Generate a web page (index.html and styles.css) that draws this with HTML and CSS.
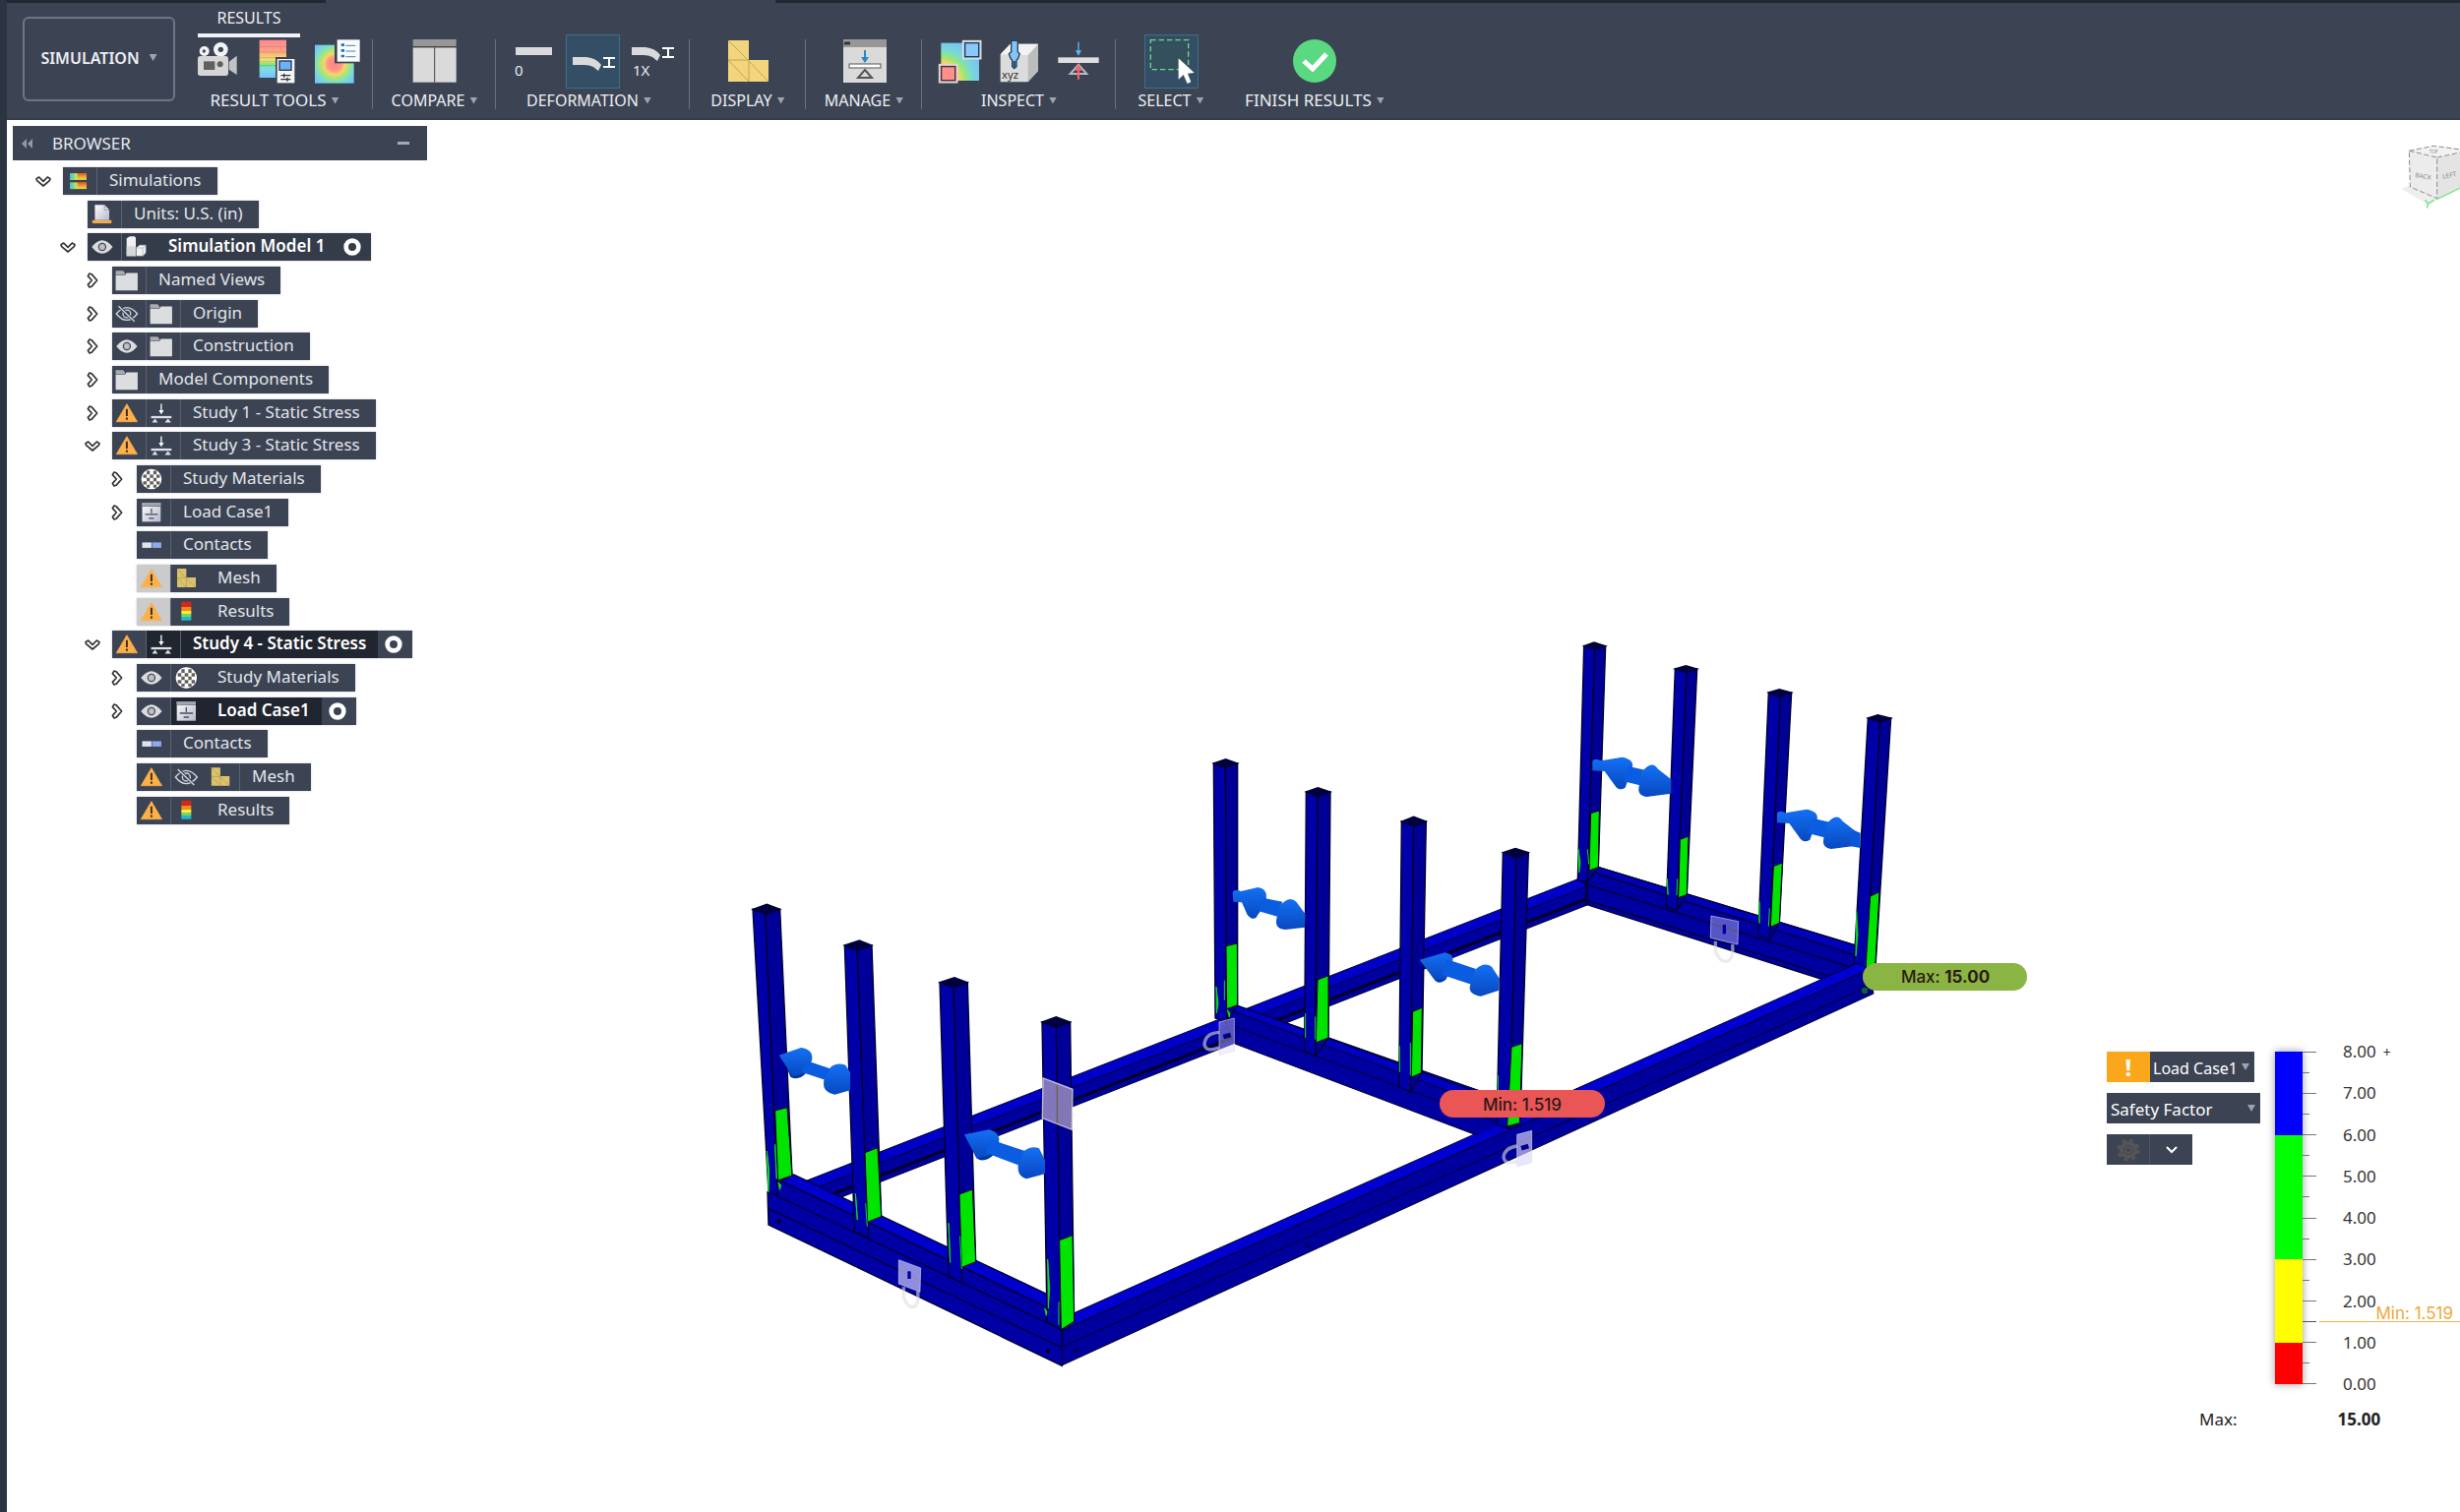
FILE: index.html
```html
<!DOCTYPE html>
<html lang="en">
<head>
<meta charset="utf-8">
<title>Simulation results</title>
<link rel="stylesheet" href="styles.css">
</head>
<body>
<svg class="sprite" aria-hidden="true">
  <defs>
    <linearGradient id="heat" x1="0" x2="0" y1="1" y2="0"><stop offset="0" stop-color="#e8e04a"/><stop offset=".5" stop-color="#f0a030"/><stop offset="1" stop-color="#e8501e"/></linearGradient>
    <linearGradient id="heatside" x1="0" x2="1"><stop offset="0" stop-color="#2cc6e8"/><stop offset=".4" stop-color="#c8e84a"/><stop offset=".5" stop-color="#c8e84a" stop-opacity="0"/></linearGradient>
    <linearGradient id="arrow" x1="0" x2="0" y1="0" y2="1"><stop offset="0" stop-color="#1470f4"/><stop offset="1" stop-color="#0848c0"/></linearGradient>
    <linearGradient id="rain" x1="0" x2="0" y1="0" y2="1"><stop offset="0" stop-color="#ff8a90"/><stop offset=".28" stop-color="#ff9f87"/><stop offset=".45" stop-color="#f6d070"/><stop offset=".58" stop-color="#e9e372"/><stop offset=".63" stop-color="#70ec84"/><stop offset=".78" stop-color="#82d8e8"/><stop offset="1" stop-color="#74c4ff"/></linearGradient>
    <radialGradient id="spot" cx=".5" cy=".5" r=".68"><stop offset="0" stop-color="#ff8288"/><stop offset=".27" stop-color="#ff9a84"/><stop offset=".4" stop-color="#f6d46c"/><stop offset=".55" stop-color="#a5e872"/><stop offset=".72" stop-color="#7cdcd0"/><stop offset="1" stop-color="#74c0ff"/></radialGradient>
    <radialGradient id="corner" cx="0" cy="1" r="1.15"><stop offset=".2" stop-color="#ff8a84"/><stop offset=".42" stop-color="#f4d468"/><stop offset=".55" stop-color="#9be870"/><stop offset=".7" stop-color="#78dcd0"/><stop offset="1" stop-color="#78bcff"/></radialGradient>
    <linearGradient id="page" x1="0" x2="1" y1="0" y2="1"><stop offset="0" stop-color="#fff"/><stop offset="1" stop-color="#b4b8cc"/></linearGradient>
  </defs>
  <symbol id="down" viewBox="0 0 48 48"><path d="M3 17 L11 12 L24 25 L37 12 L45 17 L43 23 L24 39 L5 23 Z" fill="#fff" stroke="#333" stroke-width="5" stroke-linejoin="round"/></symbol>
  <symbol id="right" viewBox="0 0 48 48"><path d="M15 3 L10 11 L22 24 L10 37 L15 45 L21 43 L38 24 L21 5 Z" fill="#fff" stroke="#333" stroke-width="5" stroke-linejoin="round"/></symbol>
  <symbol id="sims" viewBox="0 0 105 84"><path d="M22 18H74V38H22ZM22 47H74V67H22Z" fill="#f0a030"/><rect x="22" y="18" width="52" height="20" fill="url(#heat)"/><rect x="22" y="47" width="52" height="20" fill="url(#heat)"/><rect x="22" y="18" width="52" height="20" fill="url(#heatside)"/><rect x="22" y="47" width="52" height="20" fill="url(#heatside)"/></symbol>
  <symbol id="units" viewBox="0 0 105 84"><path d="M23 12H53L68 28V60H23Z" fill="url(#page)"/><path d="M53 12V28H68" fill="#d8dae4" stroke="#80869a" stroke-width="2"/><rect x="15" y="60" width="60" height="10" fill="#f2ad48"/></symbol>
  <symbol id="eye" viewBox="0 0 105 84"><path d="M13 42Q46 0 79 42Q46 84 13 42Z" fill="#d9dbdd"/><circle cx="46" cy="42" r="11" fill="#bfc0c3" stroke="#444b58" stroke-width="4"/></symbol>
  <symbol id="eyeoff" viewBox="0 0 105 84"><path d="M13 42Q46 2 79 42Q46 82 13 42Z" fill="none" stroke="#d4d7dd" stroke-width="4"/><circle cx="46" cy="42" r="12" fill="none" stroke="#d4d7dd" stroke-width="4"/><path d="M23 20L70 66" stroke="#3d4555" stroke-width="9"/><path d="M20 18L70 66" stroke="#d4d7dd" stroke-width="4"/></symbol>
  <symbol id="model" viewBox="0 0 105 84"><path d="M14 16L24 10H38L42 14V70H14Z" fill="#f1f1f3"/><path d="M14 40H42V70H14Z" fill="#d6d7da"/><path d="M43 44L54 36H73V60L64 70H43Z" fill="#f4f4f5" stroke="#6e7480" stroke-width="2"/><path d="M43 45H63V70M63 45L73 37" fill="none" stroke="#a4a8b0" stroke-width="2"/></symbol>
  <symbol id="folder" viewBox="0 0 105 84"><path d="M11 12H34L40 18V24H11Z" fill="#a9abb0"/><path d="M11 26H40L45 19H80V74H11Z" fill="#dcdddf"/></symbol>
  <symbol id="warn" viewBox="0 0 105 84"><path d="M46 13L79 69H13Z" fill="#fcb04a" stroke="#fcb04a" stroke-width="2"/><path d="M46 29V51M46 56V63" stroke="#3b2d18" stroke-width="6"/></symbol>
  <symbol id="stress" viewBox="0 0 105 84"><path d="M46 13V36" stroke="#fff" stroke-width="4"/><path d="M38 33H54L46 46Z" fill="#fff"/><rect x="14" y="51" width="64" height="7" fill="#dfe1e6"/><path d="M17 71L26 59L35 71ZM57 71L67 59L77 71Z" fill="#dfe1e6"/></symbol>
  <symbol id="mat" viewBox="0 0 105 84"><circle cx="46" cy="42" r="32" fill="#fff"/><path d="M31 16h10v11h-10zM52 16h10v11h-10zM20 28h11v10h-11zM41 28h11v10h-11zM62 28h10v10h-10zM31 38h10v11h-10zM52 38h10v11h-10zM20 49h11v10h-11zM41 49h11v10h-11zM62 49h10v10h-10zM31 60h10v9h-10zM52 60h10v9h-10z" fill="#60605c"/></symbol>
  <symbol id="load" viewBox="0 0 105 84"><rect x="17" y="12" width="58" height="59" fill="url(#page)"/><rect x="17" y="12" width="58" height="8" fill="#9da1a9"/><path d="M17 22H75" stroke="#3a4050" stroke-width="2"/><path d="M46 30V44M26 48H66M38 60H54" stroke="#4a4e58" stroke-width="4"/></symbol>
  <symbol id="contact" viewBox="0 0 105 84"><rect x="17" y="34" width="29" height="17" fill="#dde5ee"/><rect x="48" y="34" width="29" height="17" fill="#8ea9ea"/></symbol>
  <symbol id="mesh" viewBox="0 0 105 84"><path d="M18 12H46V39H75V69H18Z" fill="#dcc26c"/><path d="M18 12L46 42L75 69M18 40H46V69M18 40L46 69" fill="none" stroke="#b0984c" stroke-width="2"/></symbol>
  <symbol id="result" viewBox="0 0 105 84"><rect x="31" y="11" width="30" height="16" fill="#d02a1c"/><rect x="31" y="27" width="30" height="12" fill="#f48a1c"/><rect x="31" y="39" width="30" height="11" fill="#f8ee3c"/><rect x="31" y="50" width="30" height="9" fill="#5ce07c"/><rect x="31" y="59" width="30" height="9" fill="#22b8dc"/></symbol>
  <symbol id="ring" viewBox="0 0 105 84"><circle cx="48" cy="42" r="19" fill="none" stroke="#fff" stroke-width="14"/></symbol>
</svg>

<div class="app">
  <div class="topstrip"></div>
  <header class="toolbar">
    <button class="workspace">SIMULATION<i class="caret"></i></button>
    <div class="ribbon">
      <nav class="tabs"><a class="tab" href="#results">RESULTS</a></nav>
      <div class="groups">
        <section class="group g-tools">
          <div class="icons">
            <button class="tool" aria-label="Animate"><svg viewBox="18 15 165 165"><circle cx="53" cy="66" r="15" fill="#f2f3f5"/><circle cx="52" cy="66" r="5" fill="#3c4454"/><circle cx="103" cy="61" r="22" fill="#f2f3f5"/><circle cx="103" cy="61" r="8" fill="#3c4454"/><rect x="33" y="81" width="93" height="60" rx="8" fill="#d6d6d6"/><rect x="51" y="97" width="34" height="26" fill="#60605e"/><circle cx="101" cy="106" r="9" fill="#60605e"/><path d="M128 98L152 80V138L128 122Z" fill="#c0c2c6"/></svg></button>
            <button class="tool" aria-label="Legend options"><svg viewBox="198 15 165 165"><rect x="221" y="32" width="82" height="115" fill="url(#rain)"/><path d="M221 52H303M221 69H303M221 86H303M221 98H303M221 110H303" stroke="#555" stroke-opacity=".35" stroke-width="2"/><rect x="270" y="84" width="60" height="80" fill="#3c4454"/><rect x="275" y="90" width="53" height="73" fill="#f5f5f5"/><rect x="282" y="96" width="36" height="28" fill="#6cb2f8" stroke="#2b3a4e" stroke-width="4"/><path d="M286 140H316M286 152H316M296 134V146M306 146V158" stroke="#333" stroke-width="4"/></svg></button>
            <button class="tool" aria-label="Result details"><svg viewBox="378 15 165 165"><rect x="390" y="47" width="119" height="117" fill="url(#spot)"/><rect x="450" y="26" width="78" height="77" fill="#3c4454"/><rect x="458" y="31" width="69" height="67" fill="#fafafa"/><path d="M470 47H480M470 64H480M470 81H480" stroke="#1e78b4" stroke-width="8"/><path d="M484 49H514M484 66H514M484 83H514" stroke="#3a87ba" stroke-width="3"/></svg></button>
          </div>
          <button class="glabel">RESULT TOOLS<i class="caret"></i></button>
        </section>
        <section class="group g-compare">
          <div class="icons"><button class="tool" aria-label="Compare"><svg viewBox="673 15 165 165"><rect x="690" y="30" width="132" height="21" fill="#979797"/><rect x="690" y="55" width="132" height="106" fill="#dadada"/><path d="M690 53H822M756 55V161" stroke="#444" stroke-width="3"/></svg></button></div>
          <button class="glabel">COMPARE<i class="caret"></i></button>
        </section>
        <section class="group g-deform">
          <div class="icons">
            <button class="tool" aria-label="Undeformed"><svg viewBox="516 35 55 55"><rect x="525" y="48" width="37" height="8" fill="#dadada"/><text x="524" y="77" class="tiny">0</text></svg></button>
            <button class="tool on" aria-label="Adjusted deformation"><svg viewBox="576 35 55 55"><path d="M583 58H597Q607 59 612 66L609 72L604 68Q600 66 595 66H583Z" fill="#dadada"/><path d="M614 59H626M614 68H626M620 59V68" stroke="#fff" stroke-width="2" fill="none"/></svg></button>
            <button class="tool" aria-label="Actual deformation"><svg viewBox="636 35 55 55"><path d="M643 48H657Q667 49 672 56L669 62L664 58Q660 56 655 56H643Z" fill="#dadada"/><path d="M674 49H686M674 58H686M680 49V58" stroke="#fff" stroke-width="2" fill="none"/><text x="644" y="77" class="tiny">1X</text></svg></button>
          </div>
          <button class="glabel">DEFORMATION<i class="caret"></i></button>
        </section>
        <section class="group g-display">
          <div class="icons"><button class="tool" aria-label="Display"><svg viewBox="733 35 55 55"><path d="M740 41H761V61H781V83H740Z" fill="#f2d57c"/><path d="M740 41L761 62L781 83M740 61H761V83M740 61L761 83" fill="none" stroke="#c4a555"/></svg></button></div>
          <button class="glabel">DISPLAY<i class="caret"></i></button>
        </section>
        <section class="group g-manage">
          <div class="icons"><button class="tool" aria-label="Manage"><svg viewBox="851 35 55 55"><rect x="857" y="40" width="44" height="44" fill="#dadada"/><rect x="857" y="40" width="44" height="8" fill="#979797"/><path d="M858 44H864" stroke="#333" stroke-width="3"/><path d="M879 51V60" stroke="#2b86c8" stroke-width="2"/><path d="M875 58H883L879 64Z" fill="#2b86c8"/><rect x="863" y="65" width="32" height="4" fill="#fff" stroke="#555"/><path d="M879 71L886 79H872Z" fill="none" stroke="#555" stroke-width="2"/></svg></button></div>
          <button class="glabel">MANAGE<i class="caret"></i></button>
        </section>
        <section class="group g-inspect">
          <div class="icons">
            <button class="tool" aria-label="Min and max"><svg viewBox="24 15 165 165"><rect x="49" y="41" width="116" height="115" fill="url(#corner)"/><rect x="116" y="35" width="54" height="54" fill="#88c8fa" stroke="#d9dbde" stroke-width="5"/><rect x="122" y="41" width="42" height="42" fill="none" stroke="#2b3a4e" stroke-width="4"/><rect x="44" y="107" width="54" height="54" fill="#ff8f88" stroke="#d9dbde" stroke-width="5"/><rect x="50" y="113" width="42" height="42" fill="none" stroke="#333c4a" stroke-width="4"/></svg></button>
            <button class="tool" aria-label="Point probe"><svg viewBox="204 15 165 165"><path d="M230 76L260 44H345V126L314 160H230Z" fill="#dcdcdc"/><path d="M314 78L345 44V126L314 160Z" fill="#bcbcbc"/><path d="M230 76L260 44H345L314 78Z" fill="#f2f2f2"/><path d="M263 34H283V68L289 74L284 88L279 94V113L272 119L266 113V94L261 88L256 74L263 68Z" fill="#84c4f6" stroke="#25405c" stroke-width="4"/><path d="M268 96H277V116H268Z" fill="#30557a"/><text x="234" y="149" class="xyz">xyz</text></svg></button>
            <button class="tool" aria-label="Reactions"><svg viewBox="384 15 165 165"><rect x="406" y="85" width="124" height="17" fill="#dedede"/><path d="M468 38V68" stroke="#5cb8f0" stroke-width="4"/><path d="M459 64H477L468 80Z" fill="#5cb8f0"/><path d="M468 107L493 135H443Z" fill="none" stroke="#b8babf" stroke-width="6"/><path d="M468 120V152" stroke="#f0686a" stroke-width="6"/><path d="M455 125L468 106L481 125Z" fill="#f0686a"/></svg></button>
          </div>
          <button class="glabel">INSPECT<i class="caret"></i></button>
        </section>
        <section class="group g-select">
          <div class="icons"><button class="tool on" aria-label="Select"><svg viewBox="665 15 165 165"><rect x="684" y="32" width="115" height="90" fill="#33505c" stroke="#74d690" stroke-width="4" stroke-dasharray="16 9"/><path d="M769 88V152L784 138L796 165L807 160L797 134L817 132Z" fill="#fff"/></svg></button></div>
          <button class="glabel">SELECT<i class="caret"></i></button>
        </section>
        <section class="group g-finish">
          <div class="icons"><button class="tool" aria-label="Finish results"><svg viewBox="0 0 55 55"><circle cx="27" cy="27" r="22" fill="#5bd882"/><path d="M16 27L25 35L39 20" fill="none" stroke="#fff" stroke-width="5"/></svg></button></div>
          <button class="glabel">FINISH RESULTS<i class="caret"></i></button>
        </section>
      </div>
    </div>
  </header>

  <main class="viewport">
    <svg class="scene" viewBox="7 122 2493 1415" preserveAspectRatio="xMinYMin meet" role="img" aria-label="Safety factor plot of the frame">
      <!-- far long beam -->
      <g stroke="#000028" stroke-width="1">
        <path d="M810 1205L1605 895L1613 898V920L855 1217L830 1222Z" fill="#0000a0"/>
        <path d="M815 1202L1605 893L1613 901L828 1208Z" fill="#0000c8"/>
        <path d="M846 1214L1612 914" fill="none" stroke-width="3"/>
      </g>
      <!-- right bay -->
      <g transform="translate(1560 630) scale(.33333)" stroke="#000030" stroke-width="4">
        <path d="M155 800L195 755L990 997L1020 1055L880 1098L155 868Z" fill="#0000a0"/>
        <path d="M170 768L195 755L985 995L975 1022Z" fill="#0000b8"/>
        <path d="M160 808L965 1060M165 858L900 1088M160 795V868" fill="none"/>
        <path d="M149 80L182 90L160 800L130 795ZM427 150L462 160L433 885L400 875ZM712 222L748 235L715 975L680 960ZM1015 300L1052 312L1010 1068L972 1055Z" fill="#0000a8"/>
        <path d="M182 90L215 80L193 755L160 800ZM462 160L494 150L463 838L433 885ZM748 235L782 222L745 925L715 975ZM1052 312L1085 300L1038 1060L1010 1068Z" fill="#000094"/>
        <path d="M149 80L180 69L215 80L182 90ZM427 150L460 140L494 150L462 160ZM712 222L745 212L782 222L748 235ZM1015 300L1045 290L1085 300L1052 312Z" fill="#000040"/>
        <path d="M170 590L196 582L193 755L165 765ZM442 670L468 660L463 838L437 848ZM727 752L754 741L745 925L718 937ZM1022 843L1050 830L1037 1060L1008 1060Z" fill="#00e400" stroke-width="3"/>
        <path d="M132 700L138 740L134 770ZM403 790L405 838ZM684 860V925ZM980 890L984 960L978 1025ZM160 700L164 745M434 790L432 840M715 880L712 935" stroke="#10d820" stroke-width="3" fill="#10d820"/>
      </g>
      <!-- near long beam -->
      <g stroke="#000028" stroke-width="1">
        <path d="M1080 1352L1900 985L1904 1010L1079 1388Z" fill="#00009c"/>
        <path d="M1093 1334L1888 979L1900 985L1080 1352Z" fill="#0000d0"/>
        <path d="M1080 1369L1903 1001" fill="none"/>
        <circle cx="1329" cy="1266" r="2" fill="none"/><circle cx="1093" cy="1373" r="2" fill="none"/>
        <circle cx="1895" cy="1007" r="4" fill="#0c5a58"/>
      </g>
      <!-- middle bay -->
      <g stroke="#000028" stroke-width="1">
        <path d="M1241 1030L1257 1022L1530 1118L1536 1146L1498 1153L1255 1061Z" fill="#0000a0"/>
        <path d="M1251 1027L1257 1022L1520 1117L1515 1125Z" fill="#0000c0"/>
        <path d="M1253 1043L1533 1145" fill="none"/>
      </g>
      <g transform="translate(1140 740) scale(.33333)" stroke="#000030" stroke-width="4">
        <path d="M1085 1238L1180 1195L1222 1200L1190 1225Z" fill="#0000c8" stroke="none"/>
        <path d="M280 108L316 121L320 895L285 885ZM562 195L597 210L590 1000L557 985ZM853 285L890 300L880 1110L845 1095ZM1162 380L1203 396L1182 1222L1143 1210Z" fill="#0000a8"/>
        <path d="M316 121L353 108V845L320 895ZM597 210L636 195L630 945L590 1000ZM890 300L928 285L915 1052L880 1110ZM1203 396L1240 380L1215 1205L1182 1222Z" fill="#000094"/>
        <path d="M280 108L317 95L353 108L316 121ZM562 195L598 182L636 195L597 210ZM853 285L890 271L928 285L890 300ZM1162 380L1200 367L1240 380L1203 396Z" fill="#000040"/>
        <path d="M318 665L352 657L353 845L320 857ZM597 768L630 755V945L592 960ZM887 865L916 853L913 1052L883 1065ZM1188 973L1221 962L1213 1205L1175 1215Z" fill="#00e400" stroke-width="3"/>
        <path d="M288 790L294 840L289 870ZM560 870V945M847 970V1050M1147 1060V1110M313 770V830M590 880V950M880 960V1060M322 860L330 870L328 882Z" stroke="#10d820" stroke-width="3" fill="#10d820"/>
      </g>
      <!-- left bay -->
      <g transform="translate(740 890) scale(.33333)" stroke="#000030" stroke-width="4">
        <path d="M120 965L160 930L975 1318L1018 1385V1495L123 1065Z" fill="#0000a4"/>
        <path d="M160 930L200 912L975 1278V1318Z" fill="#0000cc"/>
        <path d="M150 978L1018 1385M123 1015L1018 1440" fill="none"/>
        <circle cx="155" cy="1055" r="5"/><circle cx="975" cy="1450" r="5"/>
        <path d="M75 103L113 118L150 975L123 965ZM355 213L393 228L428 1105L385 1085ZM645 326L687 342L713 1243L672 1220ZM957 447L1000 462L1015 1385L972 1360Z" fill="#0000a8"/>
        <path d="M113 118L158 103L195 915L150 935ZM393 228L438 213L467 1040L425 1057ZM687 342L730 326L755 1178L712 1195ZM1000 462L1043 447L1055 1360L1015 1385Z" fill="#000098"/>
        <path d="M75 103L118 88L158 103L113 118ZM355 213L400 198L438 213L393 228ZM645 326L690 311L730 326L687 342ZM957 447L1000 431L1043 447L1000 462Z" fill="#000040"/>
        <path d="M143 717L180 707L195 915L152 930ZM417 845L456 830L467 1040L425 1057ZM705 972L745 957L755 1178L712 1195ZM1010 1112L1050 1097L1055 1360L1015 1385Z" fill="#00e400" stroke-width="3"/>
        <path d="M118 840L125 900L123 965ZM388 970L394 1050ZM672 1060L677 1180ZM974 1170L980 1260L976 1320ZM143 820L148 925ZM153 935L161 945L157 958ZM965 1320L972 1330L970 1342ZM419 1000L424 1070M707 1100L712 1200M1008 1300V1370" stroke="#10d820" stroke-width="3" fill="#10d820"/>
        <path d="M960 618L1050 652L1048 775L958 740Z" fill="#b4a4c4" fill-opacity=".72" stroke="#ddd" stroke-opacity=".8"/><path d="M1003 640V755" stroke="#665" fill="none"/>
      </g>
      <!-- load arrows -->
      <g transform="translate(740 890) scale(.33333)">
        <path d="M200 560L240 600Q215 628 190 614L176 580ZM790 805L812 850Q780 880 757 862L742 828Z" fill="#0038a0"/>
        <path d="M155 548L222 525Q262 530 255 565L228 605L197 612Z" fill="url(#arrow)"/><path d="M240 565L315 590L300 625L225 600Z" fill="#0a5ce0"/><path d="M312 585Q330 568 358 578L372 600V655L325 668Q285 660 292 625Z" fill="url(#arrow)"/>
        <path d="M720 790L795 775Q832 785 825 815L795 855L757 862Z" fill="url(#arrow)"/><path d="M800 805L905 840L890 885L785 845Z" fill="#0a5ce0"/><path d="M902 840Q925 822 948 832L966 868V910L910 925Q878 915 885 878Z" fill="url(#arrow)"/>
      </g>
      <g transform="translate(1140 740) scale(.33333)">
        <path d="M960 730L990 765Q970 785 955 770ZM400 545L422 560Q400 590 382 568Z" fill="#0038a0"/>
        <path d="M908 707L985 685Q1015 690 1008 715L990 765L955 770Z" fill="url(#arrow)"/><path d="M990 705L1080 735L1068 783L975 752Z" fill="#0a5ce0"/><path d="M1080 735Q1105 712 1128 728L1152 765L1150 800L1095 818Q1055 812 1062 785Z" fill="url(#arrow)"/>
        <path d="M338 500Q345 490 363 498L415 486Q445 490 440 522L410 578Q395 588 382 568L366 532L340 530Z" fill="url(#arrow)"/><path d="M430 518L490 530L475 575L415 558Z" fill="#0a5ce0"/><path d="M480 545Q510 508 532 530L560 568L558 608L498 615Q465 612 472 582Z" fill="url(#arrow)"/>
      </g>
      <g transform="translate(1560 630) scale(.33333)">
        <g id="load-arrow"><path d="M175 432Q180 420 202 430L265 419Q302 425 297 450L275 512Q255 525 243 505L212 462L175 460Z" fill="url(#arrow)"/><path d="M285 447L335 458L325 506L268 492Z" fill="#0a5ce0"/><path d="M325 465Q355 425 375 455L415 487V530L340 540Q310 535 317 508Z" fill="url(#arrow)"/></g>
        <use href="#load-arrow" x="563" y="159"/>
        <path d="M970 641L992 650V696L960 690Z" fill="#0a58d8"/>
      </g>
      <!-- fixed constraints -->
      <g fill="#dcd8ff" fill-opacity=".65" stroke="#ddd" stroke-opacity=".6" stroke-width="3">
        <g transform="translate(740 890) scale(.33333)"><path d="M520 1172L587 1197L585 1270L520 1245Z"/><path d="M535 1255V1285Q545 1318 565 1316Q582 1310 578 1268" fill="none" stroke-width="10"/><path d="M552 1207V1230" stroke="#0000a0" stroke-opacity="1" stroke-width="10"/></g>
        <g transform="translate(1560 630) scale(.33333)"><path d="M537 903L620 920L618 990L535 970Z" fill-opacity=".4"/><path d="M550 980V1010Q562 1045 585 1042Q606 1035 602 990" fill="none" stroke-width="10"/><path d="M577 930V958" stroke="#0000a0" stroke-opacity="1" stroke-width="10"/></g>
        <g transform="translate(1140 740) scale(.33333)"><path d="M297 897L343 885V985L297 998Z" fill-opacity=".4"/><path d="M297 928Q255 930 252 965Q255 990 297 975" fill="none" stroke-width="10"/><path d="M310 942L332 936" stroke="#000080" stroke-opacity="1" stroke-width="14"/>
        <path d="M1205 1240L1250 1228V1325L1205 1338Z"/><path d="M1205 1275Q1168 1280 1164 1308Q1168 1335 1205 1322" fill="none" stroke-width="10"/><path d="M1218 1282L1240 1275" stroke="#000080" stroke-opacity="1" stroke-width="14"/></g>
      </g>
      <rect x="1463" y="1108" width="168" height="28" rx="14" fill="#ea5556"/>
      <text class="probe" x="1547" y="1129">Min: 1.519</text>
      <rect x="1893" y="979" width="167" height="28" rx="14" fill="#8ab443"/>
      <text class="probe" x="1977" y="999">Max: <tspan class="strong">15.00</tspan></text>
    </svg>

    <svg class="cube" viewBox="0 6 300 294" role="img" aria-label="View cube">
      <path d="M120 215L150 205L235 245L200 262Z" fill="#eee"/>
      <path d="M145 100L230 120V245L148 210Z" fill="#ececec"/><path d="M230 120L310 105V205L230 245Z" fill="#e4e4e4"/><path d="M145 100L220 85L310 97V105L230 120Z" fill="#f2f2f2"/>
      <path d="M145 100L230 120V245L148 210ZM230 120L310 103M145 100L220 85L310 97" fill="none" stroke="#8c8c8c" stroke-width="3" stroke-dasharray="16 7"/>
      <path d="M228 248L305 211M194 250L202 262L200 275M202 262L222 250" fill="none" stroke="#84e494" stroke-width="5"/>
      <text x="162" y="180" transform="rotate(10 162 180)">BACK</text><text x="248" y="186" transform="rotate(-12 248 186)">LEFT</text><text class="top" x="206" y="107">TOP</text>
    </svg>

    <aside class="browser">
      <div class="bhead"><button class="bare" aria-label="Collapse panel"><svg width="12" height="10" viewBox="0 0 12 10"><path d="M5 0V10L0 5ZM11 0V10L6 5Z" fill="#9198a6"/></svg></button><h2>BROWSER</h2><button class="bare" aria-label="Minimize"><span class="dash"></span></button></div>
      <ul class="tree">
        <li class="l0"><button class="tw" aria-label="Collapse"><svg><use href="#down"/></svg></button><div class="pill"><svg><use href="#sims"/></svg><span class="t">Simulations</span></div></li>
        <li class="l1"><span class="tw"></span><div class="pill"><svg><use href="#units"/></svg><span class="t">Units: U.S. (in)</span></div></li>
        <li class="l1"><button class="tw" aria-label="Collapse"><svg><use href="#down"/></svg></button><div class="pill half"><svg><use href="#eye"/></svg><svg><use href="#model"/></svg><span class="t nb">Simulation Model 1</span><svg class="end"><use href="#ring"/></svg></div></li>
        <li class="l2"><button class="tw" aria-label="Expand"><svg><use href="#right"/></svg></button><div class="pill"><svg><use href="#folder"/></svg><span class="t">Named Views</span></div></li>
        <li class="l2"><button class="tw" aria-label="Expand"><svg><use href="#right"/></svg></button><div class="pill"><svg><use href="#eyeoff"/></svg><svg><use href="#folder"/></svg><span class="t">Origin</span></div></li>
        <li class="l2"><button class="tw" aria-label="Expand"><svg><use href="#right"/></svg></button><div class="pill"><svg><use href="#eye"/></svg><svg><use href="#folder"/></svg><span class="t">Construction</span></div></li>
        <li class="l2"><button class="tw" aria-label="Expand"><svg><use href="#right"/></svg></button><div class="pill"><svg><use href="#folder"/></svg><span class="t">Model Components</span></div></li>
        <li class="l2"><button class="tw" aria-label="Expand"><svg><use href="#right"/></svg></button><div class="pill"><svg><use href="#warn"/></svg><svg><use href="#stress"/></svg><span class="t">Study 1 - Static Stress</span></div></li>
        <li class="l2"><button class="tw" aria-label="Collapse"><svg><use href="#down"/></svg></button><div class="pill"><svg><use href="#warn"/></svg><svg><use href="#stress"/></svg><span class="t">Study 3 - Static Stress</span></div></li>
        <li class="l3"><button class="tw" aria-label="Expand"><svg><use href="#right"/></svg></button><div class="pill"><svg><use href="#mat"/></svg><span class="t">Study Materials</span></div></li>
        <li class="l3"><button class="tw" aria-label="Expand"><svg><use href="#right"/></svg></button><div class="pill"><svg><use href="#load"/></svg><span class="t">Load Case1</span></div></li>
        <li class="l3"><span class="tw"></span><div class="pill"><svg><use href="#contact"/></svg><span class="t">Contacts</span></div></li>
        <li class="l3"><span class="tw"></span><div class="pill"><svg class="pale"><use href="#warn"/></svg><svg><use href="#mesh"/></svg><span class="t nb">Mesh</span></div></li>
        <li class="l3"><span class="tw"></span><div class="pill"><svg class="pale"><use href="#warn"/></svg><svg><use href="#result"/></svg><span class="t nb">Results</span></div></li>
        <li class="l2"><button class="tw" aria-label="Collapse"><svg><use href="#down"/></svg></button><div class="pill dark"><svg><use href="#warn"/></svg><svg><use href="#stress"/></svg><span class="t">Study 4 - Static Stress</span><svg class="end"><use href="#ring"/></svg></div></li>
        <li class="l3"><button class="tw" aria-label="Expand"><svg><use href="#right"/></svg></button><div class="pill"><svg><use href="#eye"/></svg><svg><use href="#mat"/></svg><span class="t nb">Study Materials</span></div></li>
        <li class="l3"><button class="tw" aria-label="Expand"><svg><use href="#right"/></svg></button><div class="pill dark"><svg><use href="#eye"/></svg><svg><use href="#load"/></svg><span class="t nb">Load Case1</span><svg class="end"><use href="#ring"/></svg></div></li>
        <li class="l3"><span class="tw"></span><div class="pill"><svg><use href="#contact"/></svg><span class="t">Contacts</span></div></li>
        <li class="l3"><span class="tw"></span><div class="pill"><svg><use href="#warn"/></svg><svg><use href="#eyeoff"/></svg><svg><use href="#mesh"/></svg><span class="t">Mesh</span></div></li>
        <li class="l3"><span class="tw"></span><div class="pill"><svg><use href="#warn"/></svg><svg><use href="#result"/></svg><span class="t nb">Results</span></div></li>
      </ul>
    </aside>

    <aside class="legend">
      <div class="controls">
        <div class="ctl case"><span class="alert">!</span><label class="drop"><select aria-label="Load case"><option>Load Case1</option></select><i class="caret"></i></label></div>
        <label class="drop ctl"><select aria-label="Result type"><option>Safety Factor</option></select><i class="caret"></i></label>
        <div class="ctl pair">
          <button aria-label="Settings" disabled><svg width="24" height="24" viewBox="0 0 24 24"><circle cx="12" cy="12" r="7" fill="none" stroke="#555" stroke-width="4"/><circle cx="12" cy="12" r="10" fill="none" stroke="#555" stroke-width="3" stroke-dasharray="4 4"/><circle cx="12" cy="12" r="3" fill="none" stroke="#555" stroke-width="2"/></svg></button>
          <button aria-label="More"><svg width="14" height="10" viewBox="0 0 14 10"><path d="M2 2L7 7L12 2" fill="none" stroke="#fff" stroke-width="2"/></svg></button>
        </div>
      </div>
      <div class="scale">
        <div class="bar"><i class="blue"></i><i class="green"></i><i class="yellow"></i><i class="red"></i></div>
        <div class="ticks"><i></i><i></i><i></i><i></i><i></i><i></i><i></i><i></i><i></i><i></i><i></i><i></i><i></i><i></i><i></i><i></i><i></i></div>
        <ol class="values"><li>8.00<small>+</small></li><li>7.00</li><li>6.00</li><li>5.00</li><li>4.00</li><li>3.00</li><li>2.00</li><li>1.00</li><li>0.00</li></ol>
        <div class="min" style="top:81%"><span>Min: 1.519</span></div>
      </div>
      <div class="max"><span>Max:</span><b>15.00</b></div>
    </aside>
  </main>
</div>
</body>
</html>
```
FILE: styles.css
```css
* { box-sizing: border-box; }
body { margin: 0; font: 17px/24px "Noto Sans", "Open Sans", sans-serif; background: #fff; }
button, select { font: inherit; color: inherit; border: 0; background: none; padding: 0; margin: 0; }
.sprite { position: absolute; width: 0; height: 0; }
.app { display: flex; flex-direction: column; min-height: 100vh; border-left: 7px solid #2c3341; }
.caret { flex: none; width: 8px; height: 7px; background: #9da4b0; clip-path: polygon(0 0, 100% 0, 50% 100%); }

.topstrip { height: 3px; background: linear-gradient(90deg, #1f2932 324px, #3c4454 324px 781px, #1f2932 781px); }
.toolbar { display: flex; align-items: flex-start; height: 119px; padding-left: 16px; background: #3c4454; border-bottom: 2px solid #343c4a; color: #eceef2; font-size: 16px; }
.workspace { display: flex; align-items: center; justify-content: center; gap: 10px; width: 155px; height: 86px; margin-top: 14px; padding-bottom: 3px; border: 2px solid #6b7789; border-radius: 6px; font-weight: 600; }
.ribbon { margin-left: 9px; }
.tabs { padding-left: 14px; }
.tab { display: block; width: 104px; height: 35px; padding-top: 3px; border-bottom: 4px solid #f1f2f8; text-align: center; color: inherit; text-decoration: none; }
.groups { display: flex; margin-top: -3px; }
.group { position: relative; flex: none; }
.group:not(:nth-last-child(-n+2))::after { content: ""; position: absolute; right: 0; top: 5px; width: 1px; height: 71px; background: #68717f; }
.g-tools { width: 192px; }
.g-compare { width: 125px; }
.g-deform, .g-inspect { width: 197px; }
.g-display, .g-manage { width: 118px; }
.g-select { width: 112px; }
.g-finish { width: 180px; }
.icons { display: flex; justify-content: center; gap: 5px; }
.tool { width: 55px; height: 55px; }
.tool svg { display: block; width: 55px; height: 55px; }
.tool.on { background: #344e66; outline: 1px solid #3c7087; outline-offset: -1px; }
.glabel { display: flex; align-items: center; justify-content: center; gap: 5px; width: 100%; height: 24px; white-space: nowrap; }
.g-tools .glabel, .g-deform .glabel { padding-right: 8px; }
.g-tools .glabel, .g-finish .glabel { font-size: 17px; }
.tiny { font-size: 15px; fill: #e8eaee; }
.xyz { font-size: 34px; fill: #333; }

.viewport { position: relative; flex: 1; min-height: 1380px; background: #fff; overflow: hidden; }
.scene { display: block; width: 100%; height: auto; }
.probe { font: 500 17px "Inter", sans-serif; text-anchor: middle; fill: #2c1a14; }
.strong { font-weight: 700; }
.cube { position: absolute; top: 0; right: 0; width: 100px; height: 98px; }
.cube text { font-size: 20px; fill: #8a8a8a; }
.cube .top { font-size: 14px; }

.browser { position: absolute; top: 6px; left: 6px; width: 421px; }
.bhead { display: flex; align-items: center; height: 35px; padding: 0 18px 0 9px; background: #3c4454; color: #e4e7ed; }
.bhead h2 { flex: 1; margin: 0 0 0 19px; font-size: 17px; font-weight: 400; }
.bare { display: flex; }
.dash { width: 12px; height: 3px; background: #a3a9b5; }
.tree { display: flex; flex-direction: column; justify-content: space-between; height: 668px; margin: 7px 0 0; padding: 0 0 0 11px; list-style: none; }
.tree li { display: flex; height: 28px; }
.l1 { padding-left: 25px; }
.l2 { padding-left: 50px; }
.l3 { padding-left: 75px; }
.tw { display: flex; align-items: center; justify-content: center; width: 40px; }
.tw svg { width: 16px; height: 16px; }
.pill { display: flex; background: #3c4454; color: #e2e5ea; box-shadow: 0 0 2px #c8cad4; }
.pill svg { width: 35px; height: 28px; border-right: 1px solid #596273; }
.pill svg:has(+ .nb), .pill svg:has(+ svg + .t:not(.nb)):nth-child(2), .pill svg.end { border-right: 0; }
.t { padding: 0 16px 0 12px; line-height: 26px; white-space: nowrap; }
.half .t, .dark .t { font-weight: 600; color: #fff; padding-right: 12px; }
.half { background: #343b49; }
.dark svg:nth-child(2), .dark .t { background: #202530; }
.pill .pale { background: #cbcbcb; }

.legend { position: absolute; top: 947px; right: 0; width: 359px; display: grid; grid-template-columns: 156px 1fr; column-gap: 15px; }
.controls { display: flex; flex-direction: column; gap: 11px; color: #fff; }
.ctl { display: flex; height: 31px; background: #3c4454; }
.case { width: 150px; }
.alert { width: 44px; background: #fba71b; font-size: 24px; font-weight: 700; line-height: 31px; text-align: center; }
.drop { position: relative; flex: 1; display: flex; }
.ctl.drop { flex: none; }
.drop select { flex: 1; appearance: none; padding: 3px 4px 0; }
.case select { font-size: 16px; padding-left: 3px; }
.drop .caret { position: absolute; right: 5px; top: 12px; }
.pair { width: 87px; }
.pair button { flex: 1; display: flex; align-items: center; justify-content: center; }
.pair button + button { border-left: 1px solid #4e5665; }
.scale { position: relative; display: flex; height: 338px; color: #333; }
.bar { display: flex; flex-direction: column; width: 28px; box-shadow: 0 0 8px #999; }
.blue { flex: 2; background: #00f; }
.green { flex: 3; background: #0f0; }
.yellow { flex: 2; background: #ff0; }
.red { flex: 1; background: #f00; }
.ticks { display: flex; flex-direction: column; justify-content: space-between; width: 14px; }
.ticks i { width: 14px; height: 1px; background: #777; }
.ticks i:nth-child(even) { width: 7px; }
.values { display: flex; flex-direction: column; justify-content: space-between; margin: -12px 0 -12px 27px; padding: 0; list-style: none; }
.values li { height: 24px; }
.values small { margin-left: 7px; font-size: 14px; }
.min { position: absolute; left: 28px; right: 0; height: 1px; background: linear-gradient(90deg, #555 14px, #fff 14px 17px, #edb04c 17px); }
.min span { position: absolute; right: 7px; bottom: -3px; font: 17px/24px "Inter", sans-serif; color: #eda839; white-space: nowrap; }
.max { grid-column: 1 / -1; display: flex; gap: 102px; margin: 24px 0 0 94px; color: #222; }
```
